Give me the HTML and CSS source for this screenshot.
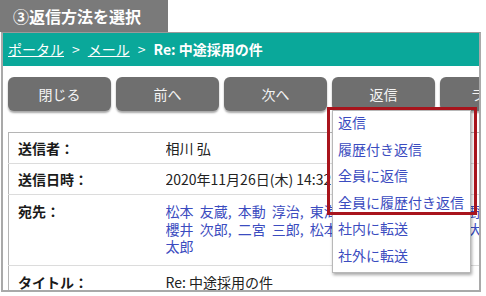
FILE: index.html
```html
<!DOCTYPE html>
<html lang="ja">
<head>
  <meta charset="UTF-8" />
  <title>返信方法を選択</title>
  <link rel="stylesheet" href="styles.css">
</head>
<body>
  <div class="step">③返信方法を選択</div>

  <div class="shot">
    <div class="crumbs">
      <a href="#">ポータル</a><span class="sep">&gt;</span><a href="#">メール</a><span class="sep">&gt;</span><b>Re: 中途採用の件</b>
    </div>

    <div class="content">
      <div class="toolbar">
        <button class="tool-btn">閉じる</button>
        <button class="tool-btn">前へ</button>
        <button class="tool-btn">次へ</button>
        <button class="tool-btn">返信</button>
        <button class="tool-btn">ラベル</button>
      </div>

      <table class="mail-head">
        <colgroup>
          <col class="label-col">
          <col>
        </colgroup>
        <tr>
          <th>送信者：</th>
          <td>相川 弘</td>
        </tr>
        <tr>
          <th>送信日時：</th>
          <td>2020年11月26日(木) 14:32</td>
        </tr>
        <tr class="to-row">
          <th>宛先：</th>
          <td class="to">
            <a href="#">松本 友蔵</a>, <a href="#">本動 淳治</a>, <a href="#">東海林 健一郎</a>, <a href="#">佐藤 舞</a>, <a href="#">野田 聡</a><br>
            <a href="#">櫻井 次郎</a>, <a href="#">二宮 三郎</a>, <a href="#">松本 花子</a>, <a href="#">中村 一二三</a>, <a href="#">大野</a><br>
            <a href="#">太郎</a>
          </td>
        </tr>
        <tr class="title-row">
          <th>タイトル：</th>
          <td>Re: 中途採用の件</td>
        </tr>
      </table>
    </div>

    <!-- 返信ボタンのドロップダウン -->
    <ul class="reply-menu">
      <li><a href="#">返信</a></li>
      <li><a href="#">履歴付き返信</a></li>
      <li><a href="#">全員に返信</a></li>
      <li><a href="#">全員に履歴付き返信</a></li>
      <li><a href="#">社内に転送</a></li>
      <li><a href="#">社外に転送</a></li>
    </ul>
    <div class="highlight"></div>
  </div>
</body>
</html>
```

FILE: styles.css
```css
* {
  margin: 0;
  padding: 0;
  box-sizing: border-box;
  font-family: "Noto Sans CJK JP", "Noto Sans", sans-serif;
}

body {
  background: #fff;
  width: 486px;
  height: 296px;
  overflow: hidden;
}

.step {
  width: 168px;
  height: 32px;
  background: #7a7a7a;
  color: #fff;
  font-size: 16px;
  font-weight: 700;
  line-height: 32px;
  padding-left: 13px;
}

.shot {
  position: relative;
  margin-left: 1px;
  width: 480px;
  height: 260px;
  border: 2px solid #a9a9a9;
  border-top: 1px solid #9a9a9a;
  overflow: hidden;
}

.crumbs {
  height: 33px;
  background: #0aa89a;
  color: #fff;
  font-size: 14px;
  line-height: 32px;
  padding-left: 5px;
  white-space: nowrap;
}

.crumbs a {
  color: #fff;
  text-decoration: underline;
}

.crumbs .sep {
  margin: 0 8px;
}

.crumbs b {
  font-weight: 700;
}

.content {
  padding: 11px 0 0 5px;
}

.toolbar {
  display: flex;
  gap: 5px;
}

.tool-btn {
  flex: none;
  width: 103px;
  height: 34px;
  border: none;
  border-radius: 6px;
  background: #6f6f6f;
  color: #f4f4f4;
  font-size: 14px;
  box-shadow: 0 2px 2px rgba(0, 0, 0, 0.35);
}

.mail-head {
  margin-top: 21px;
  width: 490px;
  table-layout: fixed;
  border-collapse: collapse;
  border: 1px solid #b5b5b5;
  font-size: 14px;
  color: #222;
}

.label-col {
  width: 157px;
}

.mail-head tr {
  border-bottom: 1px solid #dcdcdc;
}

.mail-head th {
  text-align: left;
  vertical-align: top;
  font-weight: 700;
  padding: 5px 0 5px 9px;
  line-height: 20px;
  color: #1a1a1a;
}

.mail-head td {
  vertical-align: top;
  padding: 5px 0;
  line-height: 20px;
  white-space: nowrap;
  overflow: hidden;
}

.to-row th {
  padding-top: 6px;
}

.mail-head td.to {
  padding: 8px 0 9px;
  line-height: 17.5px;
  word-spacing: 3px;
  color: #3b4cc0;
}

.mail-head .title-row th,
.mail-head .title-row td {
  padding-top: 6px;
}

.to a {
  color: #3b4cc0;
  text-decoration: none;
}

.reply-menu {
  position: absolute;
  left: 329px;
  top: 77px;
  width: 139px;
  list-style: none;
  background: #fff;
  border: 1px solid #b8b8b8;
  box-shadow: 1px 2px 3px rgba(0, 0, 0, 0.35);
  padding: 1px 0;
}

.reply-menu li {
  height: 26.5px;
  line-height: 20px;
  padding-left: 5px;
  font-size: 14px;
  white-space: nowrap;
}

.reply-menu a {
  color: #3b4cc0;
  text-decoration: none;
}

.highlight {
  position: absolute;
  left: 324px;
  top: 74px;
  width: 150px;
  height: 108px;
  border: 3px solid #a8141c;
}
```
